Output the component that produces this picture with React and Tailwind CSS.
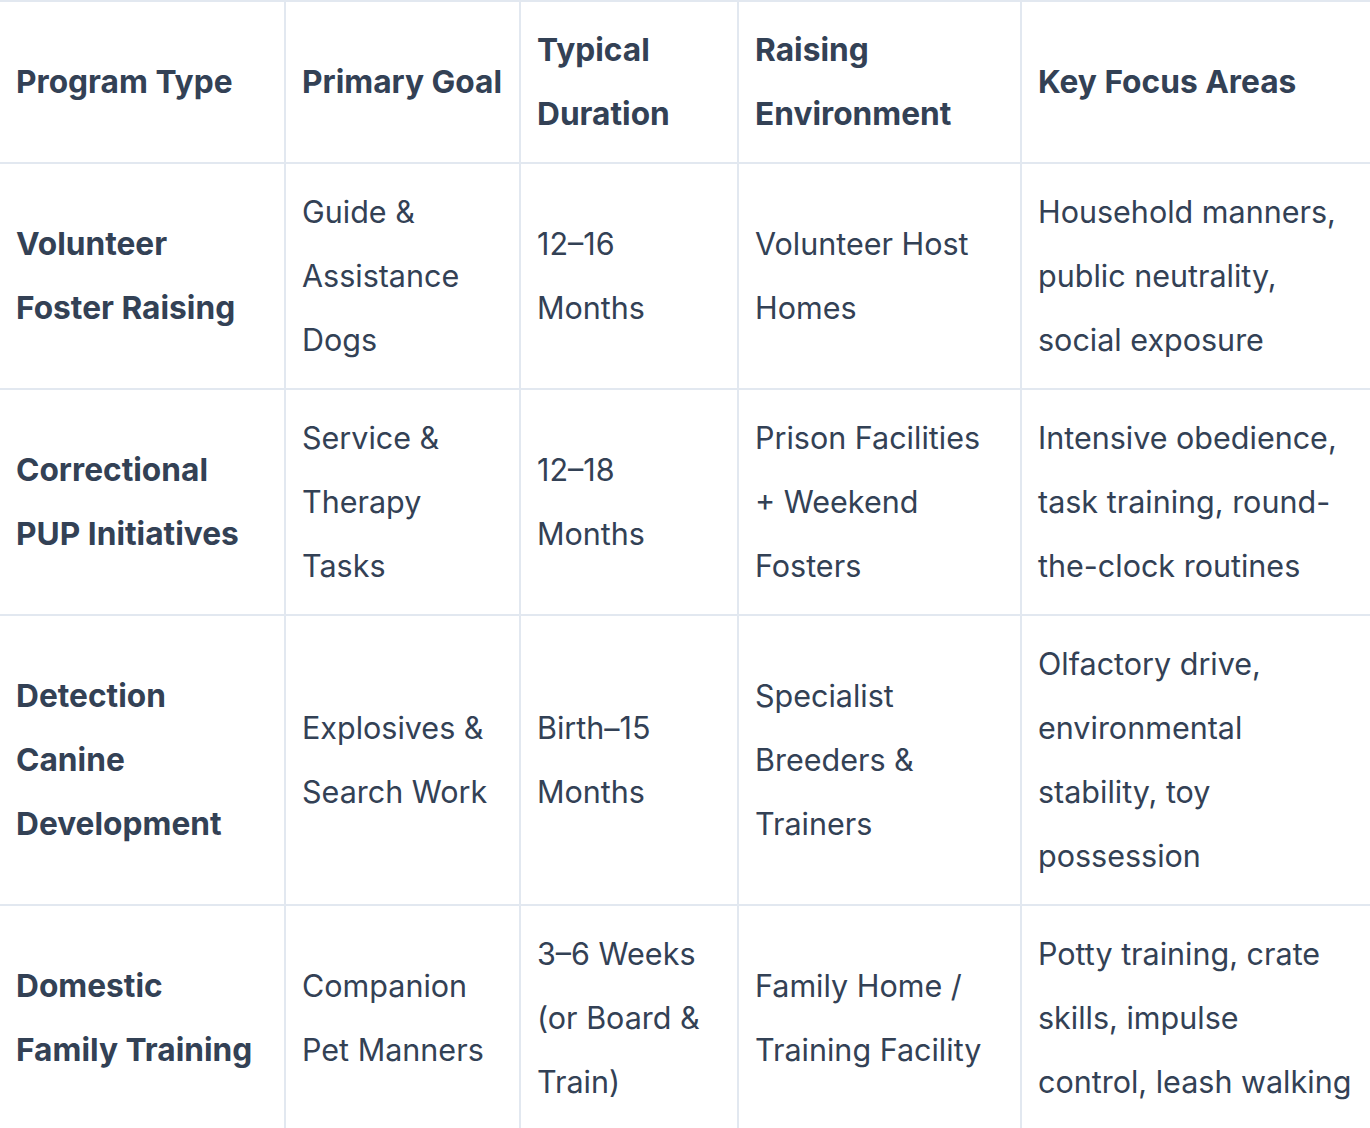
import React from "react";

const header = ["Program Type", "Primary Goal", "Typical Duration", "Raising Environment", "Key Focus Areas"];
const rows = [
  ["Volunteer Foster Raising", "Guide & Assistance Dogs", "12–16 Months", "Volunteer Host Homes", "Household manners, public neutrality, social exposure"],
  ["Correctional PUP Initiatives", "Service & Therapy Tasks", "12–18 Months", "Prison Facilities + Weekend Fosters", "Intensive obedience, task training, round-the-clock routines"],
  ["Detection Canine Development", "Explosives & Search Work", "Birth–15 Months", "Specialist Breeders & Trainers", "Olfactory drive, environmental stability, toy possession"],
  ["Domestic Family Training", "Companion Pet Manners", "3–6 Weeks (or Board & Train)", "Family Home / Training Facility", "Potty training, crate skills, impulse control,\u00a0leash\u00a0walking"],
];

const colCls = [
  "w-[284px]",
  "w-[235px] border-l-2 border-[#e2e8f0]",
  "w-[218px] border-l-2 border-[#e2e8f0]",
  "w-[283px] border-l-2 border-[#e2e8f0]",
  "w-[350px] border-l-2 border-[#e2e8f0]",
];

export default function App() {
  return (
    <div className="bg-white w-[1370px] h-[1128px] overflow-hidden text-[#334155]" style={{ fontFamily: "Inter, 'Noto Sans', sans-serif" }}>
      <div className="flex border-t-2 border-[#e2e8f0]">
        {header.map((h, i) => (
          <div key={i} className={`${colCls[i]} shrink-0 flex items-center px-4 py-4 text-[31.7px] leading-[64px] font-bold`}>
            <span>{h}</span>
          </div>
        ))}
      </div>
      {rows.map((r, ri) => (
        <div key={ri} className="flex border-t-2 border-[#e2e8f0]">
          {r.map((c, i) => (
            <div key={i} className={`${colCls[i]} shrink-0 flex items-center px-4 py-4 leading-[64px] ${i === 0 ? "text-[31.7px] font-bold" : "text-[30.5px] font-normal"}`}>
              <span>{c}</span>
            </div>
          ))}
        </div>
      ))}
    </div>
  );
}
